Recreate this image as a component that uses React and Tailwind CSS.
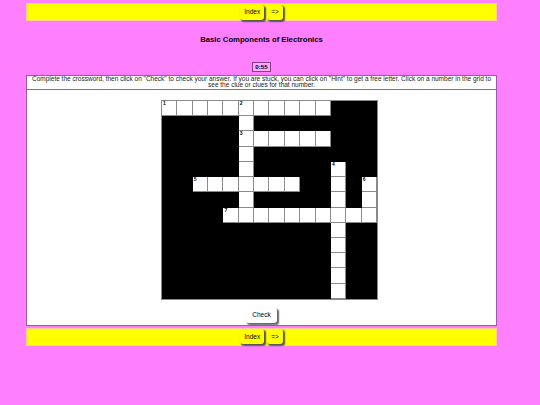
import React from 'react';

const ROWS = 13;
const COLS = 14;

// across / down words as [row, col, length, dir]
const words = [
  [0, 0, 11, 'a'],
  [0, 5, 8, 'd'],
  [2, 5, 6, 'a'],
  [4, 11, 9, 'd'],
  [5, 2, 7, 'a'],
  [5, 13, 3, 'd'],
  [7, 4, 10, 'a'],
];

const numbers = { '0-0': 1, '0-5': 2, '2-5': 3, '4-11': 4, '5-2': 5, '5-13': 6, '7-4': 7 };

const white = new Set();
words.forEach(([r, c, len, dir]) => {
  for (let i = 0; i < len; i++) {
    white.add(dir === 'a' ? `${r}-${c + i}` : `${r + i}-${c}`);
  }
});

function NavButton({ children }) {
  return (
    <button
      className="h-[15px] px-[4px] rounded-[3px] bg-[#ffff00] text-[6.5px] text-black
        shadow-[1.5px_1.5px_1.5px_#555] leading-none"
    >
      {children}
    </button>
  );
}

function NavBar() {
  return (
    <div className="h-[18px] bg-[#ffff00] border border-[#ffd090] flex justify-center items-center gap-[3px]">
      <NavButton>Index</NavButton>
      <NavButton>=&gt;</NavButton>
    </div>
  );
}

function Grid() {
  const cells = [];
  for (let r = 0; r < ROWS; r++) {
    for (let c = 0; c < COLS; c++) {
      const key = `${r}-${c}`;
      if (white.has(key)) {
        cells.push(
          <div key={key} className="relative bg-white border-r border-b border-[#8a8a8a]">
            {numbers[key] && (
              <span className="absolute left-[1px] top-[0px] text-[5px] leading-none font-bold text-black">
                {numbers[key]}
              </span>
            )}
          </div>
        );
      } else {
        cells.push(<div key={key} className="bg-black" />);
      }
    }
  }
  return (
    <div
      className="w-[217px] h-[200px] border border-[#8a8a8a] bg-black grid
        grid-cols-[repeat(14,1fr)] grid-rows-[repeat(13,1fr)]"
    >
      {cells}
    </div>
  );
}

export default function App() {
  return (
    <div
      className="w-[540px] h-[405px] bg-[#ff80ff] overflow-hidden"
      style={{ fontFamily: '"Liberation Sans", Arial, sans-serif' }}
    >
      <div className="w-[523px] pt-[3px]">
        <div className="w-[471px] mx-auto">
          <NavBar />
          <div className="mt-[15px] text-center text-[7.7px] font-bold text-black leading-none">
            Basic Components of Electronics
          </div>
          <div className="mt-[18px] flex justify-center">
            <div className="h-[10px] px-[2px] border border-[#8a3a8a] bg-[#ffa8ff] text-[6.2px] font-bold leading-[8px] text-black">
              0:55
            </div>
          </div>
          <div className="mt-[3px] bg-white border border-[#9a5aa8]">
            <div className="px-[4px] text-center text-[6.5px] leading-[6.6px] text-[#222]">
              Complete the crossword, then click on "Check" to check your answer. If you are stuck, you can click
              on "Hint" to get a free letter. Click on a number in the grid to see the clue or clues for that number.
            </div>
            <div className="border-t border-[#9a5aa8] pt-[10px] pb-[2px] flex flex-col items-center">
              <div className="pl-[16px]">
                <Grid />
              </div>
              <button
                className="mt-[8px] h-[15px] px-[6px] rounded-[3px] bg-white text-[6.5px] text-black leading-none
                  shadow-[1.5px_1.5px_1.5px_#666]"
              >
                Check
              </button>
            </div>
          </div>
          <div className="mt-[2px]">
            <NavBar />
          </div>
        </div>
      </div>
    </div>
  );
}
